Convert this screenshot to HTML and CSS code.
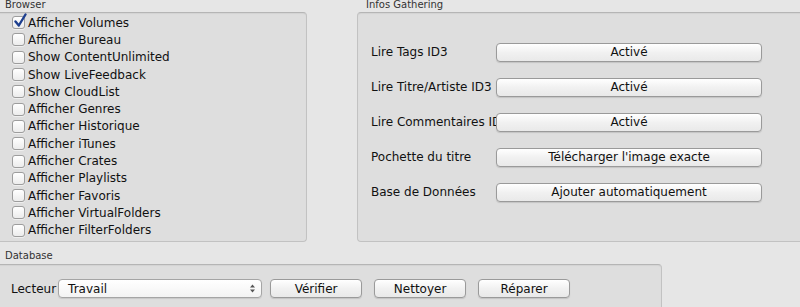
FILE: index.html
```html
<!DOCTYPE html>
<html lang="fr">
<head>
  <meta charset="UTF-8" />
  <title>Préférences</title>
  <link rel="stylesheet" href="styles.css">
</head>
<body>

  <div class="top">
    <div class="group browser">
      <div class="group-title">Browser</div>
      <div class="group-box">
        <ul class="checks">
          <li><span class="check on"><svg viewBox="0 0 16 16" width="16" height="16"><path d="M3.5 8.5 L6.8 12.5 L13.5 1.5" fill="none" stroke="#1d3f8f" stroke-width="2.4" stroke-linecap="round" stroke-linejoin="round"/></svg></span>Afficher Volumes</li>
          <li><span class="check"></span>Afficher Bureau</li>
          <li><span class="check"></span>Show ContentUnlimited</li>
          <li><span class="check"></span>Show LiveFeedback</li>
          <li><span class="check"></span>Show CloudList</li>
          <li><span class="check"></span>Afficher Genres</li>
          <li><span class="check"></span>Afficher Historique</li>
          <li><span class="check"></span>Afficher iTunes</li>
          <li><span class="check"></span>Afficher Crates</li>
          <li><span class="check"></span>Afficher Playlists</li>
          <li><span class="check"></span>Afficher Favoris</li>
          <li><span class="check"></span>Afficher VirtualFolders</li>
          <li><span class="check"></span>Afficher FilterFolders</li>
        </ul>
      </div>
    </div>

    <div class="group infos">
      <div class="group-title">Infos Gathering</div>
      <div class="group-box">
        <div class="info-rows">
          <div class="info-row"><span class="info-label">Lire Tags ID3</span><button class="btn wide">Activé</button></div>
          <div class="info-row"><span class="info-label">Lire Titre/Artiste ID3</span><button class="btn wide">Activé</button></div>
          <div class="info-row"><span class="info-label">Lire Commentaires ID3</span><button class="btn wide">Activé</button></div>
          <div class="info-row"><span class="info-label">Pochette du titre</span><button class="btn wide">Télécharger l'image exacte</button></div>
          <div class="info-row"><span class="info-label">Base de Données</span><button class="btn wide">Ajouter automatiquement</button></div>
        </div>
      </div>
    </div>
  </div>

  <div class="group database">
    <div class="group-title">Database</div>
    <div class="group-box">
      <div class="db-row">
        <span class="db-label">Lecteur</span>
        <div class="select">
          <span>Travail</span>
          <svg viewBox="0 0 7 11" width="7" height="11"><path d="M1 4.5 L3.5 1.5 L6 4.5 Z M1 6.5 L3.5 9.5 L6 6.5 Z" fill="#555"/></svg>
        </div>
        <button class="btn small">Vérifier</button>
        <button class="btn small">Nettoyer</button>
        <button class="btn small">Réparer</button>
      </div>
    </div>
  </div>

</body>
</html>
```

FILE: styles.css
```css
* {
  margin: 0;
  padding: 0;
  box-sizing: border-box;
}

body {
  width: 800px;
  height: 307px;
  overflow: hidden;
  background: #e6e6e6;
  font-family: 'DejaVu Sans', 'Liberation Sans', sans-serif;
  font-size: 12px;
  color: #111;
}

.top {
  display: flex;
  height: 243px;
}

.group {
  flex: none;
}

.group-title {
  height: 12px;
  font-size: 10px;
  line-height: 10px;
  color: #333;
  padding-left: 9px;
}

.group-box {
  background: #dedede;
  border: 1px solid #c2c2c2;
  border-top-color: #b5b5b5;
  border-radius: 4px;
  box-shadow: inset 0 1px 1px rgba(0,0,0,0.05);
}

.browser {
  width: 311px;
  margin-left: -4px;
}

.browser .group-box {
  height: 230px;
  padding: 1px 0 0 15px;
}

.infos {
  width: 470px;
  margin-left: 50px;
}

.infos .group-box {
  height: 230px;
  padding: 30px 0 0 13px;
}

.checks {
  list-style: none;
}

.checks li {
  display: flex;
  align-items: center;
  height: 17.3px;
  white-space: nowrap;
}

.check {
  position: relative;
  width: 13px;
  height: 13px;
  margin-right: 3px;
  border: 1px solid #9d9d9d;
  border-radius: 3px;
  background: linear-gradient(#ffffff, #ececec);
  box-shadow: 0 1px 0 rgba(255,255,255,0.5);
}

.check svg {
  position: absolute;
  left: -1px;
  top: -4px;
}

.info-rows {
  display: flex;
  flex-direction: column;
  gap: 17px;
}

.info-row {
  display: flex;
  align-items: center;
  height: 18px;
}

.info-label {
  width: 125px;
  flex: none;
  white-space: nowrap;
}

.btn {
  font-family: inherit;
  font-size: 12px;
  color: #111;
  height: 19px;
  border: 1px solid #9a9a9a;
  border-radius: 4px;
  background: linear-gradient(#ffffff, #f1f1f1 50%, #e9e9e9);
  box-shadow: 0 1px 1px rgba(0,0,0,0.12);
  flex: none;
}

.btn.wide {
  width: 266px;
}

.database {
  width: 666px;
  margin-left: -4px;
  margin-top: 7px;
}

.database .group-title {
  height: 14px;
  line-height: 12px;
}

.database .group-box {
  height: 43px;
  padding: 14px 0 0 14px;
  border-bottom: none;
  border-radius: 4px 4px 0 0;
}

.db-row {
  display: flex;
  align-items: center;
}

.db-label {
  margin-right: 2px;
}

.select {
  display: flex;
  align-items: center;
  justify-content: space-between;
  width: 204px;
  height: 19px;
  padding: 0 5px 0 9px;
  margin-right: 8px;
  border: 1px solid #a5a5a5;
  border-radius: 4px;
  background: linear-gradient(#ffffff, #f3f3f3);
  box-shadow: 0 1px 1px rgba(0,0,0,0.1);
}

.btn.small {
  width: 92px;
  margin-right: 12px;
}
```
